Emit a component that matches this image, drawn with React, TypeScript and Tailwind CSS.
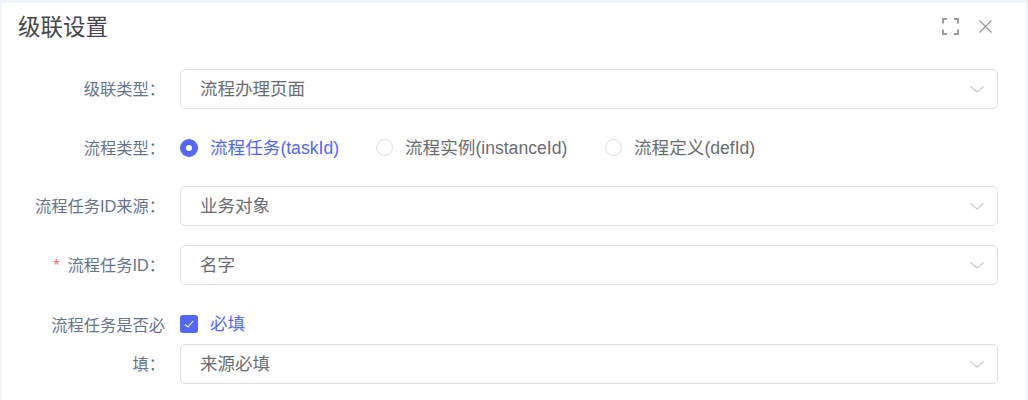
import React from "react";

const font = { fontFamily: '"Liberation Sans", "Noto Sans CJK SC", sans-serif' };

function Chevron() {
  return (
    <svg width="16" height="16" viewBox="0 0 16 16" fill="none" className="shrink-0">
      <path d="M1.5 5.5 L8 11 L14.5 5.5" stroke="#c6cad3" strokeWidth="1.1" />
    </svg>
  );
}

function Select({ value }: { value: string }) {
  return (
    <div className="flex h-10 w-full items-center justify-between rounded-[5px] border border-[#dcdfe6] bg-white pl-[19px] pr-[12px] text-[17.5px] text-[#6b6d72]">
      <span className="pt-px">{value}</span>
      <Chevron />
    </div>
  );
}

function Label({ children, required }: { children: React.ReactNode; required?: boolean }) {
  return (
    <div className="w-[178px] shrink-0 pr-[15px] pt-px text-right text-[16.25px] text-[#66758f]">
      {required && <span className="mr-2 text-[#f56c6c]">*</span>}
      {children}
    </div>
  );
}

function Radio({ label, active, className }: { label: string; active?: boolean; className: string }) {
  return (
    <div className={`flex items-center ${className}`}>
      {active ? (
        <span className="flex h-[18px] w-[18px] items-center justify-center rounded-full bg-[#5468ff]">
          <span className="h-[6px] w-[6px] rounded-full bg-white" />
        </span>
      ) : (
        <span className="h-[17px] w-[17px] rounded-full border border-[#dcdfe6] bg-white" />
      )}
      <span className={`ml-3 pt-px text-[17.6px] ${active ? "text-[#5468ff]" : "text-[#6b6d72]"}`}>{label}</span>
    </div>
  );
}

export default function App() {
  return (
    <div className="h-[400px] w-[1028px] overflow-hidden bg-[#f0f4f8] pl-[2px] pr-[2px] pt-[3px]" style={font}>
      <div className="h-full bg-white">
        <div className="flex h-[46px] items-center justify-between pl-[16px] pr-[34px] pt-[3px]">
          <h1 className="pt-px text-[22.5px] text-[#45474b]">级联设置</h1>
          <div className="flex items-center gap-[20px] pb-[3px]">
            <svg width="17" height="17" viewBox="0 0 17 17" fill="none" stroke="#9a9da3" strokeWidth="2">
              <path d="M1 5.5 V1 H5 M12 1 H16 V5.5 M16 11.5 V16 H12 M5 16 H1 V11.5" />
            </svg>
            <svg width="13" height="13" viewBox="0 0 13 13" fill="none" stroke="#8f9399" strokeWidth="1.1">
              <path d="M0.5 0.5 L12.5 12.5 M12.5 0.5 L0.5 12.5" />
            </svg>
          </div>
        </div>
        <div className="flex flex-col pr-[28px] pt-[20px]">
          <div className="flex items-center">
            <Label>级联类型：</Label>
            <Select value="流程办理页面" />
          </div>
          <div className="mt-[19px] flex h-10 items-center">
            <Label>流程类型：</Label>
            <Radio active label="流程任务(taskId)" className="w-[196px]" />
            <Radio label="流程实例(instanceId)" className="w-[229px]" />
            <Radio label="流程定义(defId)" className="" />
          </div>
          <div className="mt-[18px] flex items-center">
            <Label>流程任务ID来源：</Label>
            <Select value="业务对象" />
          </div>
          <div className="mt-[19px] flex items-center">
            <Label required>流程任务ID：</Label>
            <Select value="名字" />
          </div>
          <div className="mt-[19px] flex items-start">
            <div className="w-[178px] shrink-0 pr-[15px] text-right text-[16.25px] leading-[40px] text-[#66758f]">
              <div className="h-[40px] pt-px">流程任务是否必</div>
              <div>填：</div>
            </div>
            <div className="flex flex-1 flex-col">
              <div className="flex h-10 items-center">
                <span className="flex h-[18px] w-[18px] items-center justify-center rounded-[3px] bg-[#5468ff]">
                  <svg width="12" height="12" viewBox="0 0 12 12" fill="none" stroke="white" strokeWidth="1.1">
                    <path d="M2 6.5 L5 9 L10 3" />
                  </svg>
                </span>
                <span className="ml-3 pt-px text-[17.5px] text-[#5468ff]">必填</span>
              </div>
              <Select value="来源必填" />
            </div>
          </div>
        </div>
      </div>
    </div>
  );
}
